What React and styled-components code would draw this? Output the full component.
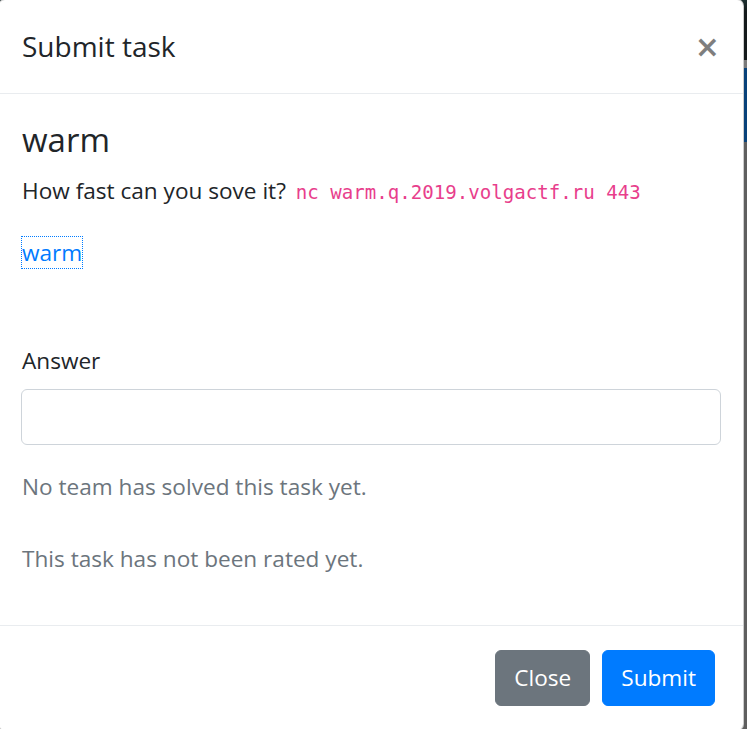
import React from 'react';
import styled, { createGlobalStyle } from 'styled-components';

const GlobalStyle = createGlobalStyle`
  html, body {
    margin: 0;
    padding: 0;
  }
  body {
    font-family: "Open Sans", "Noto Sans", sans-serif;
    color: #212529;
    overflow: hidden;
    background: linear-gradient(
      to bottom,
      #1d3030 0px,
      #151a1c 12px,
      #151a1c 60px,
      #7a7a7a 60px,
      #7a7a7a 68px,
      #08427a 68px,
      #08427a 142px,
      #5f5f5f 142px
    );
  }
`;

const Backdrop = styled.div`
  height: 729px;
  overflow: hidden;
`;

const Dialog = styled.div`
  box-sizing: border-box;
  width: 746px;
  margin: -1px 0 0 -2px;
  background: #fff;
  border: 1px solid rgba(0, 0, 0, 0.2);
  border-radius: 7px;
`;

const Header = styled.div`
  display: flex;
  align-items: flex-start;
  justify-content: space-between;
  padding: 24px 22px 24px 23px;
  border-bottom: 1px solid #e9ecef;
`;

const Title = styled.h5`
  margin: 0;
  font-size: 28px;
  line-height: 45px;
  font-weight: 400;
  color: #212529;
`;

const CloseX = styled.button`
  border: 0;
  background: transparent;
  padding: 0;
  margin: 0 1px 0 0;
  font-family: "DejaVu Sans", sans-serif;
  font-size: 30px;
  font-weight: 700;
  line-height: 45px;
  color: #000;
  opacity: 0.5;
  cursor: pointer;
`;

const Body = styled.div`
  padding: 24px 22px 24px 23px;
`;

const TaskName = styled.h4`
  margin: 0 0 12px;
  font-size: 33px;
  line-height: 43px;
  font-weight: 400;
`;

const Text = styled.p`
  margin: 0 0 ${(p) => p.gap || 24}px;
  font-size: 22.6px;
  line-height: 36px;
  color: ${(p) => (p.muted ? '#6c757d' : '#212529')};
`;

const Code = styled.code`
  margin-left: 4px;
  font-family: "DejaVu Sans Mono", "Liberation Mono", monospace;
  font-size: 19.1px;
  color: #e83e8c;
`;

const TaskLink = styled.a`
  color: #007bff;
  text-decoration: none;
  outline: 1px dotted #007bff;
  outline-offset: 0;
`;

const FormGroup = styled.div`
  margin: 72px 0 24px;
`;

const Label = styled.label`
  display: block;
  margin-bottom: 10px;
  font-size: 22.6px;
  line-height: 36px;
`;

const Input = styled.input`
  display: block;
  box-sizing: border-box;
  width: 700px;
  height: 56px;
  margin-left: -1px;
  padding: 9px 18px;
  border: 1px solid #ced4da;
  border-radius: 6px;
  font-size: 22px;
  font-family: inherit;
  outline: none;
`;

const Footer = styled.div`
  display: flex;
  justify-content: flex-end;
  gap: 12px;
  padding: 24px 28px 24px 24px;
  border-top: 1px solid #e9ecef;
`;

const Button = styled.button`
  height: 56px;
  padding: 0 18px;
  border: 1px solid ${(p) => p.bg};
  border-radius: 6px;
  background: ${(p) => p.bg};
  color: #fff;
  font-family: inherit;
  font-size: 22.6px;
  line-height: 36px;
  cursor: pointer;
`;

export default function App() {
  return (
    <>
      <GlobalStyle />
      <Backdrop>
        <Dialog>
          <Header>
            <Title>Submit task</Title>
            <CloseX aria-label="Close">×</CloseX>
          </Header>
          <Body>
            <TaskName>warm</TaskName>
            <Text>
              How fast can you sove it? <Code>nc warm.q.2019.volgactf.ru 443</Code>
            </Text>
            <Text>
              <TaskLink href="#">warm</TaskLink>
            </Text>
            <FormGroup>
              <Label htmlFor="answer">Answer</Label>
              <Input id="answer" type="text" />
            </FormGroup>
            <Text muted gap={36}>No team has solved this task yet.</Text>
            <Text muted gap={0}>This task has not been rated yet.</Text>
          </Body>
          <Footer>
            <Button bg="#6c757d">Close</Button>
            <Button bg="#007bff">Submit</Button>
          </Footer>
        </Dialog>
      </Backdrop>
    </>
  );
}
